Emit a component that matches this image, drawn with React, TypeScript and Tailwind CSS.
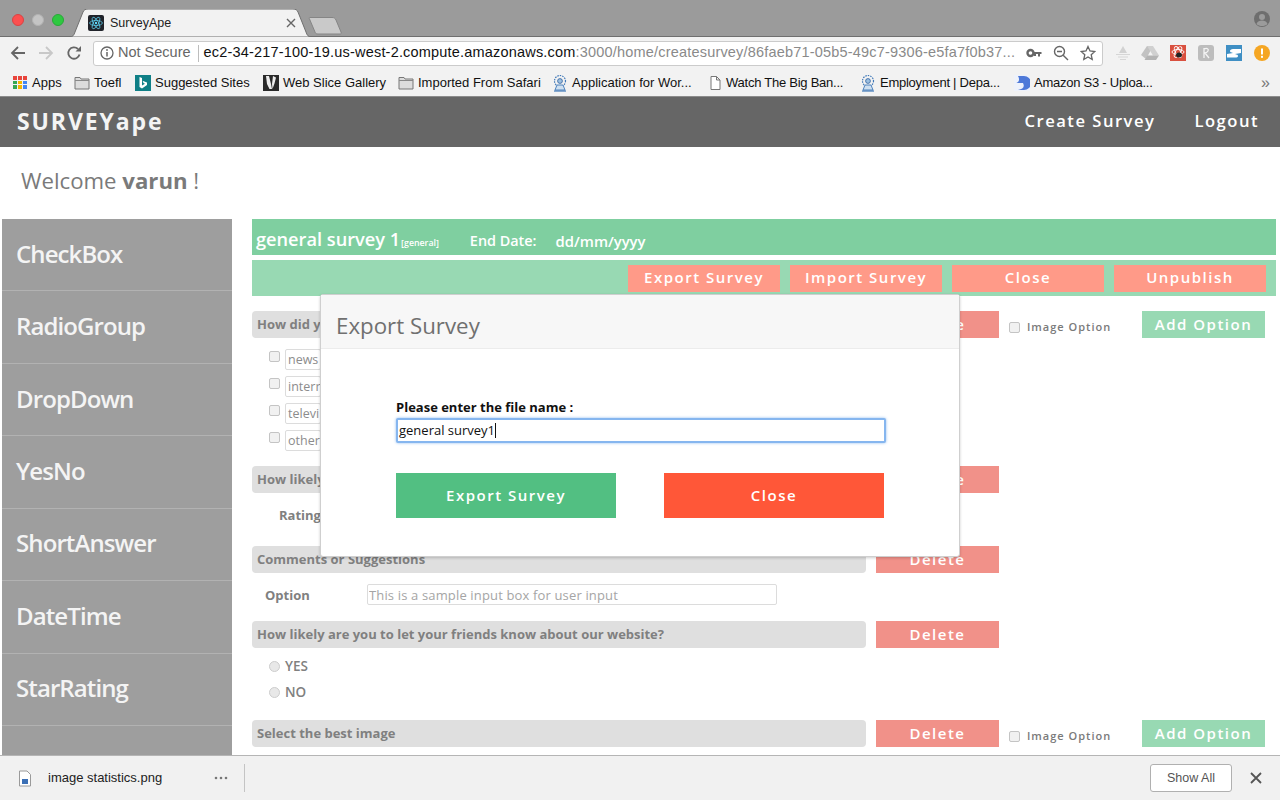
import React from 'react';

const ui = "font-['Liberation_Sans',sans-serif]";
const app = "font-['Open_Sans',sans-serif]";

const FolderIcon = () => (
  <svg width="16" height="14" viewBox="0 0 16 14" className="shrink-0">
    <path d="M1 3V1.500h5L7 3h8v10H1z" fill="#dcdcdc" stroke="#777" strokeWidth="1" />
    <path d="M1 4.500h14" stroke="#888" strokeWidth="1" />
  </svg>
);

const SealIcon = () => (
  <svg width="16" height="18" viewBox="0 0 16 18" className="shrink-0">
    <circle cx="8" cy="7" r="5.500" fill="none" stroke="#3f78b8" strokeWidth="1.200" strokeDasharray="1.500 1" />
    <circle cx="8" cy="7" r="2.400" fill="#9cc0e0" stroke="#2f5f9f" strokeWidth="0.800" />
    <path d="M3 16l2-5h6l2 5z" fill="#cfe0f0" stroke="#3f78b8" strokeWidth="0.900" />
    <path d="M2 17h12" stroke="#3f78b8" strokeWidth="1.200" />
  </svg>
);

const AppsIcon = () => (
  <div className="grid grid-cols-3 gap-[1px] shrink-0 mr-[1px]">
    {['#e8453c', '#e8453c', '#e8453c', '#34a853', '#f4b400', '#4285f4', '#34a853', '#f4b400', '#4285f4'].map((c, i) => (
      <div key={i} className="w-[4px] h-[3.500px]" style={{ backgroundColor: c }} />
    ))}
  </div>
);

const ReactFavicon = () => (
  <svg width="16" height="16" viewBox="0 0 16 16" className="shrink-0">
    <rect width="16" height="16" rx="2" fill="#20232a" />
    <g fill="none" stroke="#61dafb" strokeWidth="0.700">
      <ellipse cx="8" cy="8" rx="6.400" ry="2.500" />
      <ellipse cx="8" cy="8" rx="6.400" ry="2.500" transform="rotate(60 8 8)" />
      <ellipse cx="8" cy="8" rx="6.400" ry="2.500" transform="rotate(120 8 8)" />
    </g>
    <circle cx="8" cy="8" r="1.200" fill="#61dafb" />
  </svg>
);

const BrowserTabs = () => (
  <div className="h-[37px] bg-[#9b9b9b] border-b border-[#6f6f6f] flex items-end relative shrink-0">
    <div className="flex gap-[8px] ml-[12px] mb-[10px]">
      <div className="w-[12px] h-[12px] rounded-full bg-[#fc4f4f] border border-[#d84343]" />
      <div className="w-[12px] h-[12px] rounded-full bg-[#c4c4c4] border border-[#b2b2b2]" />
      <div className="w-[12px] h-[12px] rounded-full bg-[#2ec840] border border-[#28a838]" />
    </div>
    <div className="relative w-[243px] h-[28px] ml-[5px] -mb-px flex items-center">
      <svg width="243" height="28" viewBox="0 0 243 28" className="absolute inset-0">
        <path d="M0 28C4 28 5 26 6 23L14 3C15 1 16 0 19 0H224C227 0 228 1 229 3L237 23C238 26 239 28 243 28Z" fill="#f2f2f2" stroke="#6f6f6f" strokeWidth="1" />
      </svg>
      <div className="relative flex items-center ml-[19px]">
        <ReactFavicon />
        <span className={`${ui} text-[12.5px] text-[#222] ml-[6px] w-[176px]`}>SurveyApe</span>
        <svg width="10" height="10" viewBox="0 0 10 10">
          <path d="M1 1l8 8M9 1l-8 8" stroke="#666" strokeWidth="1.400" />
        </svg>
      </div>
    </div>
    <svg width="36" height="18" viewBox="0 0 36 18" className="ml-[-4px] mb-[1px]">
      <path d="M2 0.500H24C26 0.500 27 1 28 3L33 15C33.500 16.500 33 17 32 17H10C8 17 7.500 16.500 7 15L1.500 2C1 1 1 0.500 2 0.500Z" fill="#c9c9c9" stroke="#858585" />
    </svg>
    <svg width="18" height="18" viewBox="0 0 18 18" className="absolute right-[9px] top-[10px]">
      <circle cx="9" cy="9" r="8" fill="#6e6e6e" />
      <circle cx="9" cy="7" r="3" fill="#9b9b9b" />
      <path d="M3.500 14c1-3 3-3.500 5.500-3.500s4.500.5 5.500 3.500c-1.500 1.500-3.500 2-5.500 2s-4-.5-5.500-2z" fill="#9b9b9b" />
    </svg>
  </div>
);

const Toolbar = () => (
  <div className="h-[32px] bg-[#f2f2f2] flex items-center shrink-0">
    <div className="flex items-center w-[93px] pl-[10px] gap-[12px]">
      <svg width="16" height="16" viewBox="0 0 16 16">
        <path d="M15 8H2M8 2L2 8l6 6" fill="none" stroke="#666" strokeWidth="1.800" />
      </svg>
      <svg width="16" height="16" viewBox="0 0 16 16">
        <path d="M1 8h13M8 2l6 6-6 6" fill="none" stroke="#c8c8c8" strokeWidth="1.800" />
      </svg>
      <svg width="16" height="16" viewBox="0 0 16 16">
        <path d="M13.500 9.500A5.700 5.700 0 1 1 12 4" fill="none" stroke="#666" strokeWidth="1.800" />
        <path d="M9.500 6.500H15V1z" fill="#666" />
      </svg>
    </div>
    <div className="w-[1010px] h-[25px] bg-white border border-[#cbcbcb] rounded-[3px] flex items-center pl-[6px]">
      <svg width="14" height="14" viewBox="0 0 14 14" className="shrink-0">
        <circle cx="7" cy="7" r="6" fill="none" stroke="#666" strokeWidth="1.300" />
        <path d="M7 6v4.500" stroke="#666" strokeWidth="1.500" />
        <circle cx="7" cy="4" r="0.900" fill="#666" />
      </svg>
      <span className={`${ui} text-[14.5px] text-[#666] ml-[4px] whitespace-nowrap`}>Not Secure</span>
      <div className="w-px h-[17px] bg-[#bdbdbd] ml-[7px] mr-[5px]" />
      <span className={`${ui} text-[14.5px] whitespace-nowrap tracking-[0.19px] w-[812px]`}>
        <span className="text-[#111]">ec2-34-217-100-19.us-west-2.compute.amazonaws.com</span>
        <span className="text-[#8a8a8a]">:3000/home/createsurvey/86faeb71-05b5-49c7-9306-e5fa7f0b37...</span>
      </span>
      <svg width="16" height="10" viewBox="0 0 16 10" className="ml-[10px]">
        <circle cx="4.500" cy="5" r="3" fill="none" stroke="#666" strokeWidth="2.400" />
        <path d="M7.500 4h8v2h-1.500v2.500h-2V6H10v2H8z" fill="#666" />
      </svg>
      <svg width="16" height="16" viewBox="0 0 16 16" className="ml-[11px]">
        <circle cx="6.500" cy="6.500" r="5" fill="none" stroke="#666" strokeWidth="1.400" />
        <path d="M10.200 10.200L15 15M4 6.500h5" stroke="#666" strokeWidth="1.400" />
      </svg>
      <svg width="16" height="16" viewBox="0 0 16 16" className="ml-[11px]">
        <path d="M8 1.500l2 4.500 4.800.5-3.600 3.200 1 4.800L8 12l-4.200 2.500 1-4.800L1.200 6.500 6 6z" fill="none" stroke="#666" strokeWidth="1.300" />
      </svg>
    </div>
    <div className="flex items-center ml-[11px]">
      <svg width="18" height="16" viewBox="0 0 18 16">
        <path d="M9 1l4 7H5z" fill="#d2d2d2" />
        <path d="M2 9.500h14M4 12h10M6 14.500h6" stroke="#d6d6d6" strokeWidth="1.200" />
      </svg>
      <svg width="18" height="16" viewBox="0 0 18 16" className="ml-[9px]">
        <path d="M6 1h6L8 8.500 5 14 0 10z" fill="#c2c2c2" />
        <path d="M6 1h6l6 9.500h-6z" fill="#d0d0d0" />
        <path d="M6.500 10.500H18L15 15H3.500z" fill="#b4b4b4" />
      </svg>
      <div className="w-[16px] h-[16px] ml-[11px] bg-[#d9503f] flex items-center justify-center">
        <svg width="14" height="14" viewBox="0 0 14 14">
          <g fill="none" stroke="#fff" strokeWidth="0.900">
            <ellipse cx="7" cy="6" rx="6" ry="2.500" />
            <ellipse cx="7" cy="6" rx="6" ry="2.500" transform="rotate(60 7 6)" />
            <ellipse cx="7" cy="6" rx="6" ry="2.500" transform="rotate(120 7 6)" />
          </g>
          <ellipse cx="8" cy="9" rx="3" ry="2.500" fill="#222" />
        </svg>
      </div>
      <div className="w-[16px] h-[16px] ml-[12px] rounded-[3px] bg-[#bdbdbd] flex items-center justify-center">
        <svg width="10" height="12" viewBox="0 0 10 12">
          <path d="M3 1v10M3 2c3-1.500 5 0 4 2S4 6 3 6M4 6l4 5" fill="none" stroke="#f4f4f4" strokeWidth="1.300" />
        </svg>
      </div>
      <div className="w-[16px] h-[16px] ml-[12px] bg-[#fff] border border-[#3f8fc4] overflow-hidden">
        <svg width="14" height="14" viewBox="0 0 14 14">
          <path d="M0 0h14v3H6C4 3 3 4 3 5s1 1.500 3 2L0 8z" fill="#3f8fc4" />
          <path d="M14 14H0v-2.500h8c2 0 3-.5 3-1.500s-1-1.500-3-2l6-1z" fill="#3f8fc4" />
        </svg>
      </div>
      <svg width="16" height="16" viewBox="0 0 16 16" className="ml-[12px]">
        <circle cx="8" cy="8" r="8" fill="#f5a623" />
        <rect x="7" y="3.500" width="2" height="6" fill="#fff" />
        <rect x="7" y="10.800" width="2" height="2" fill="#fff" />
      </svg>
    </div>
  </div>
);

const Bookmark = ({ icon, label, className }: { icon: React.ReactNode; label: string; className: string }) => (
  <div className={`flex items-center ${className}`}>
    {icon}
    <span className={`${ui} text-[13px] text-[#111] whitespace-nowrap ml-[4px]`}>{label}</span>
  </div>
);

const BookmarksBar = () => (
  <div className="h-[28px] bg-[#f2f2f2] border-b border-[#8c8c8c] flex items-center shrink-0 pl-[13px]">
    <Bookmark className="w-[61px]" label="Apps" icon={<AppsIcon />} />
    <Bookmark className="w-[61px]" label="Toefl" icon={<FolderIcon />} />
    <Bookmark
      className="w-[128px]"
      label="Suggested Sites"
      icon={
        <svg width="16" height="16" viewBox="0 0 16 16" className="shrink-0">
          <rect width="16" height="16" fill="#0f7f86" />
          <path d="M4.500 2L7 3v7.500l3-1.700-1.500-.7-1-2.300 4.500 1.600v2.700L7 13.500l-2.500-1.400z" fill="#fff" />
        </svg>
      }
    />
    <Bookmark
      className="w-[135px]"
      label="Web Slice Gallery"
      icon={
        <svg width="16" height="16" viewBox="0 0 16 16" className="shrink-0">
          <rect width="16" height="16" fill="#2a2a2a" />
          <path d="M3 1h3l2 8 1 5H6.500L4 9zM10 1l3 1.500-1.500 6L9.500 14 9 9z" fill="#eee" />
        </svg>
      }
    />
    <Bookmark className="w-[154px]" label="Imported From Safari" icon={<FolderIcon />} />
    <Bookmark className="w-[156px]" label="Application for Wor..." icon={<SealIcon />} />
    <Bookmark
      className="w-[152px] tracking-[-0.25px]"
      label="Watch The Big Ban..."
      icon={
        <svg width="14" height="16" viewBox="0 0 14 16" className="shrink-0">
          <path d="M3 1.500h5.500L12 5v9.500H3zM8.500 1.500V5H12" fill="#fff" stroke="#777" />
        </svg>
      }
    />
    <Bookmark className="w-[154px] tracking-[-0.25px]" label="Employment | Depa..." icon={<SealIcon />} />
    <Bookmark
      className="w-[150px] tracking-[-0.25px]"
      label="Amazon S3 - Uploa..."
      icon={
        <svg width="16" height="16" viewBox="0 0 16 16" className="shrink-0">
          <rect width="16" height="16" fill="#eef2fb" />
          <path d="M4 1h6a7 7 0 0 1 0 14H4c5-1 7-3 5-7H2c3 0 4-4 2-7z" fill="#4e79d8" />
        </svg>
      }
    />
    <span className={`${ui} text-[16px] text-[#777] ml-[97px]`}>»</span>
  </div>
);

const Check = () => <div className="w-[11px] h-[11px] rounded-[2px] bg-[#f1f1f1] border border-[#c4c4c4] shrink-0" />;
const Radio = () => <div className="w-[11px] h-[11px] rounded-full bg-[#e8e8e8] border border-[#cdcdcd] shrink-0" />;

const QuestionBar = ({ title, imageOption }: { title: string; imageOption?: boolean }) => (
  <div className="flex items-stretch h-[27px]">
    <div className={`${app} w-[614px] rounded-[4px] bg-[#dfdfdf] text-[#808080] text-[13px] font-bold leading-[27px] pl-[5px] whitespace-nowrap`}>
      {title}
    </div>
    <button className={`${app} w-[123px] ml-[10px] bg-[#f19189] text-white text-[15px] font-semibold tracking-[1.500px]`}>Delete</button>
    {imageOption && (
      <>
        <div className="flex items-center ml-[10px] w-[133px] pt-[5px]">
          <Check />
          <span className={`${app} text-[#7a7a7a] text-[11px] font-semibold tracking-[1px] ml-[7px]`}>Image Option</span>
        </div>
        <button className={`${app} w-[123px] bg-[#98d9b3] text-white text-[15px] font-semibold tracking-[1.500px]`}>Add Option</button>
      </>
    )}
  </div>
);

const OptionRow = ({ label }: { label: string }) => (
  <div className="flex items-start h-[27px] pl-[17px]">
    <div className="mt-[2px]"><Check /></div>
    <div className={`${app} ml-[5px] w-[36px] h-[21px] border border-[#dcdcdc] rounded-[2px] text-[#8c8c8c] text-[12.500px] font-normal leading-[20px] pl-[2px] overflow-hidden whitespace-nowrap`}>
      {label}
    </div>
  </div>
);

const Survey = () => (
  <div className="ml-[20px] w-[1024px]">
    <div className={`${app} h-[36px] bg-[#7fcfa0] text-white font-semibold flex items-center pl-[4px] pt-[4px] whitespace-nowrap`}>
      <span className="text-[18.200px] mt-[1px]">general survey 1</span>
      <span className="text-[8.800px] mt-[9px] ml-[1px]">[general]</span>
      <span className="text-[14.400px] ml-[31px] mt-[4px]">End Date:</span>
      <span className="text-[14.800px] ml-[19px] mt-[4px]">dd/mm/yyyy</span>
    </div>
    <div className="h-[36px] mt-[5px] bg-[#98d9b3] flex items-center justify-end gap-[10px] pr-[10px]">
      {['Export Survey', 'Import Survey', 'Close', 'Unpublish'].map((b) => (
        <button key={b} className={`${app} w-[152px] h-[27px] pb-[2px] bg-[#ff9a88] text-white text-[15px] font-semibold tracking-[1.500px]`}>{b}</button>
      ))}
    </div>

    <div className="mt-[15px]">
      <QuestionBar title="How did y" imageOption />
      <div className="mt-[11px] h-[117px]">
        {['news', 'interr', 'televi', 'other'].map((o) => (
          <OptionRow key={o} label={o} />
        ))}
      </div>
      <QuestionBar title="How likely" />
      <div className={`${app} h-[53px] pl-[27px] pt-[13px] text-[#808080] text-[13px] font-bold`}>Rating</div>
      <QuestionBar title="Comments or Suggestions" />
      <div className="h-[48px] flex items-center pb-[5px]">
        <span className={`${app} w-[115px] pl-[13px] mt-[2px] text-[#808080] text-[13px] font-bold`}>Option</span>
        <input
          readOnly
          placeholder="This is a sample input box for user input"
          className={`${app} w-[410px] h-[21px] border border-[#dcdcdc] rounded-[2px] text-[13px] pl-[1px] tracking-[0.15px] placeholder:text-[#a5a5a5]`}
        />
      </div>
      <QuestionBar title="How likely are you to let your friends know about our website?" />
      <div className={`${app} h-[72px] pt-[5px] pl-[17px] text-[#808080] text-[13.500px] font-semibold`}>
        <div className="flex items-center h-[26px] gap-[5px]"><Radio /><span>YES</span></div>
        <div className="flex items-center h-[26px] gap-[5px]"><Radio /><span>NO</span></div>
      </div>
      <QuestionBar title="Select the best image" imageOption />
    </div>
  </div>
);

const Sidebar = () => (
  <div className="ml-[2px] w-[230px] bg-[#9e9e9e] shrink-0 h-[600px]">
    {['CheckBox', 'RadioGroup', 'DropDown', 'YesNo', 'ShortAnswer', 'DateTime', 'StarRating'].map((t) => (
      <div key={t} className={`${app} h-[72.450px] border-b border-[#b2b2b2] flex items-center pl-[14px] pb-[2px] text-[24px] tracking-[-0.900px] font-semibold text-[#f4f4f4]`}>
        {t}
      </div>
    ))}
  </div>
);

const ExportModal = () => (
  <div className="absolute left-[320px] top-[294px] w-[640px] h-[263px] bg-white border border-[#cfcfcf] rounded-[3px] shadow-[0_1px_3px_rgba(0,0,0,0.2)]">
    <div className={`${app} h-[54px] bg-[#f7f7f7] border-b border-[#ececec] pl-[15px] text-[22.300px] text-[#707070] leading-[61px]`}>Export Survey</div>
    <div className="px-[75px] pt-[49px]">
      <div className={`${app} text-[13px] font-bold text-[#111] leading-[18px]`}>Please enter the file name :</div>
      <div className={`${app} mt-[2px] w-[490px] h-[25px] bg-white border-2 border-[#86b6ef] shadow-[0_0_3px_#8fbcf0] rounded-[2px] text-[13px] text-[#111] leading-[21px] pl-[1px] flex items-center`}>
        general survey1<span className="w-px h-[15px] bg-[#111]" />
      </div>
      <div className="flex justify-between w-[488px] mt-[30px]">
        <button className={`${app} w-[220px] h-[45px] bg-[#52bf82] text-white text-[15px] font-semibold tracking-[1.500px]`}>Export Survey</button>
        <button className={`${app} w-[220px] h-[45px] bg-[#ff5738] text-white text-[15px] font-semibold tracking-[1.500px]`}>Close</button>
      </div>
    </div>
  </div>
);

const DownloadBar = () => (
  <div className="h-[45px] bg-[#f1f1f1] border-t border-[#b5b5b5] flex items-center shrink-0 relative">
    <svg width="14" height="17" viewBox="0 0 14 17" className="ml-[18px]">
      <path d="M1.500 1h7.500l3.500 3.500V16h-11z" fill="#fff" stroke="#9a9a9a" />
      <rect x="4" y="9" width="6" height="5" fill="#3b6fb5" />
    </svg>
    <span className={`${ui} text-[13px] text-[#222] ml-[16px] w-[166px]`}>image statistics.png</span>
    <svg width="14" height="4" viewBox="0 0 14 4" className="mr-[16px]">
      <circle cx="2" cy="2" r="1.300" fill="#777" />
      <circle cx="7" cy="2" r="1.300" fill="#777" />
      <circle cx="12" cy="2" r="1.300" fill="#777" />
    </svg>
    <div className="w-px h-[28px] bg-[#c4c4c4]" />
    <button className={`${ui} ml-auto w-[82px] h-[28px] bg-white border border-[#b0b0b0] rounded-[3px] text-[12.5px] text-[#555]`}>Show All</button>
    <svg width="12" height="12" viewBox="0 0 12 12" className="ml-[18px] mr-[18px]">
      <path d="M1 1l10 10M11 1L1 11" stroke="#555" strokeWidth="1.800" />
    </svg>
  </div>
);

export default function App() {
  return (
    <div className="w-[1280px] h-[800px] flex flex-col overflow-hidden relative bg-white">
      <BrowserTabs />
      <Toolbar />
      <BookmarksBar />
      <div className="h-[50px] bg-[#666666] flex items-center shrink-0 text-white pb-[2px]">
        <span className={`${app} text-[23px] font-bold tracking-[1.900px] ml-[17px] text-[#f4f4f4]`}>SURVEYape</span>
        <span className={`${app} text-[16.600px] font-semibold tracking-[1.500px] ml-auto`}>Create Survey</span>
        <span className={`${app} text-[16.600px] font-semibold tracking-[1.500px] ml-[39px] mr-[21px]`}>Logout</span>
      </div>
      <div className="flex-1 overflow-hidden">
        <div className={`${app} h-[72px] pl-[21px] pt-[17px] text-[22.200px] text-[#7a7a7a]`}>
          Welcome <span className="font-bold">varun</span> !
        </div>
        <div className="flex">
          <Sidebar />
          <Survey />
        </div>
      </div>
      <DownloadBar />
      <ExportModal />
    </div>
  );
}
